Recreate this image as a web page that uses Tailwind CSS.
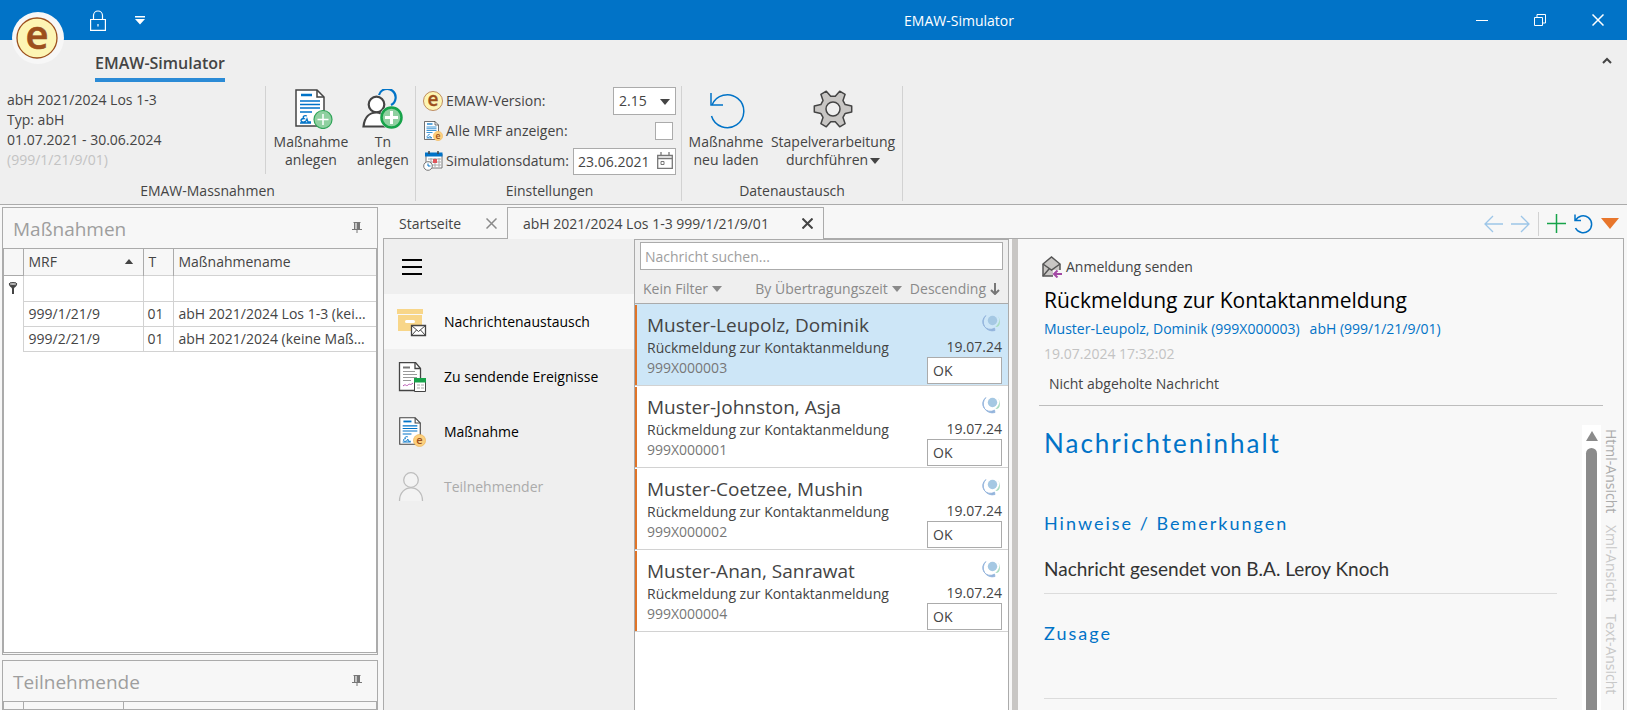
<!DOCTYPE html>
<html lang="de">
<head>
    <meta charset="UTF-8">
    <meta name="viewport" content="width=device-width, initial-scale=1.0">
    <title>EMAW-Simulator</title>
    <script src="https://cdn.jsdelivr.net/npm/@tailwindcss/browser@4"></script>
</head>
<body class="h-screen flex flex-col overflow-hidden bg-[#f7f7f7] font-['Open_Sans','Noto_Sans',sans-serif] text-sm leading-5 text-[#444444]">

    <!-- Icons -->
    <svg class="hidden">
        <symbol id="ico-doc" viewBox="0 0 30 38">
            <path d="M1 1h21l7 7v29H1z" fill="#fff" stroke="#444" stroke-width="1.5"/>
            <path d="M22 1v7h7" fill="none" stroke="#444" stroke-width="1.5"/>
            <path d="M6 6h11" stroke="#0173c7" stroke-width="2.5"/>
            <path d="M5 12h20M5 15.500h20M5 19h20M5 23h12" stroke="#0173c7" stroke-width="1.500"/>
            <path d="M12 27c-3-1-5 1-3 2.500-4 0-4 4 0 3.500 2 0 3-3 3-3l1 3h3M5 34h11" fill="none" stroke="#0173c7" stroke-width="1.300"/>
        </symbol>
        <symbol id="ico-coin" viewBox="0 0 20 20">
            <circle cx="10" cy="10" r="9.300" fill="#fcd07e" stroke="#eeb050" stroke-width="1"/>
            <text x="10" y="15" text-anchor="middle" font-size="17" font-weight="600" fill="#9c4f1c">e</text>
        </symbol>
        <symbol id="ico-e" viewBox="0 0 42 42">
            <circle cx="21" cy="21" r="20" fill="#fdf5b4" stroke="#9c4f1c" stroke-width="1.300"/>
            <text x="21" y="32" text-anchor="middle" font-size="40" font-weight="600" fill="#9c4f1c" stroke="#9c4f1c" stroke-width=".6">e</text>
        </symbol>
        <symbol id="ico-reload" viewBox="0 0 36 36">
            <path d="M1.500 23a16.500 16.500 0 1 0 .5-11" fill="none" stroke="#0173c7" stroke-width="1.500"/>
            <path d="M1 0v12h12" fill="none" stroke="#0173c7" stroke-width="1.500"/>
        </symbol>
        <symbol id="ico-down" viewBox="0 0 10 6"><path d="M0 0h10L5 6z" fill="currentColor"/></symbol>
        <symbol id="ico-pin" viewBox="0 0 10 12">
            <path d="M2 1h3v6H2z" fill="#c5c5c5"/>
            <path d="M5 1h3v7H5z" fill="#777"/>
            <path d="M1.500 .5h7M0 7.500h10M5 8v3M2.500 1v6" fill="none" stroke="#777"/>
        </symbol>
        <symbol id="ico-globe" viewBox="0 0 18 18">
            <path d="M4 1.500A9 9 0 0 0 13 16.500L12.500 14A7 7 0 0 1 4 1.500z" fill="#93b4dc" stroke="#93b4dc" stroke-width=".8" stroke-linejoin="round"/>
            <circle cx="10.500" cy="6.500" r="4.700" fill="#a5c8e3"/>
            <path d="M16.300 2.500c1.800 3.500 1 7.500-3 10.500 3.500.3 5-2.500 4.500-6-.2-2-.8-3.500-1.500-4.500z" fill="#a9dcc0"/>
        </symbol>
    </svg>

    <!-- Titelleiste -->
    <header class="relative flex h-10 shrink-0 items-center bg-[#0173c7] text-white">
        <button class="absolute left-3 top-3 z-10 flex size-[52px] items-center justify-center rounded-full bg-[#f7f7f7]" aria-label="Anwendungsmenü">
            <svg class="mr-0.5 size-[42px]"><use href="#ico-e"/></svg>
        </button>
        <div class="flex w-[465px] items-center pl-[90px]">
            <button aria-label="Sperren">
                <svg width="16" height="21" viewBox="0 0 16 21" fill="none" stroke="#fff" stroke-width="1.200"><path d="M.6 9.500h14.800v10.800H.6z"/><path d="M3.500 9.500V5.500a4.500 4.500 0 0 1 9 0v4"/><path d="M8 14v2.500"/></svg>
            </button>
            <button class="ml-[29px]" aria-label="Schnellzugriff anpassen">
                <svg width="10" height="9" viewBox="0 0 10 9" fill="#fff"><path d="M0 0h10v1.500H0zM0 3h10L5 8.500z"/></svg>
            </button>
        </div>
        <h1 class="flex-1 pt-0.5 text-center">EMAW-Simulator</h1>
        <div class="flex h-full">
            <button class="flex w-[58px] items-center justify-center" aria-label="Minimieren"><svg width="12" height="12" stroke="#fff"><path d="M0 6.500h12"/></svg></button>
            <button class="flex w-[58px] items-center justify-center" aria-label="Wiederherstellen"><svg width="12" height="12" stroke="#fff" fill="none"><path d="M.5 3.500h8v8h-8zM3 3V.5h8.500V9H9"/></svg></button>
            <button class="flex w-[58px] items-center justify-center" aria-label="Schließen"><svg width="12" height="12" stroke="#fff" stroke-width="1.500"><path d="M.5.5l11 11M11.500.5l-11 11"/></svg></button>
        </div>
    </header>

    <!-- Ribbon -->
    <section class="shrink-0 border-b border-[#ababab] bg-[#efefef]">
        <div class="flex h-[46px] items-start justify-between pl-[95px] pr-[15px] pt-3">
            <button class="h-[30px] border-b-4 border-[#2b8bd6] pb-1 text-base font-semibold leading-5">EMAW-Simulator</button>
            <button class="pt-1" aria-label="Menüband minimieren"><svg width="10" height="10" fill="none" stroke="#444" stroke-width="2"><path d="M1 7l4-4 4 4"/></svg></button>
        </div>
        <div class="flex h-[118px] pb-[3px]">
            <div class="flex w-[416px] flex-col border-r border-[#d2d2d2]">
                <div class="flex flex-1 items-start">
                    <div class="h-[88px] w-[266px] border-r border-[#d2d2d2] pl-[7px] pt-1">
                        <p>abH 2021/2024 Los 1-3</p>
                        <p>Typ: abH</p>
                        <p>01.07.2021 - 30.06.2024</p>
                        <p class="text-[#c3c3c3]">(999/1/21/9/01)</p>
                    </div>
                    <button class="flex w-[90px] flex-col items-center pt-[3px] leading-[18px]">
                        <svg class="mb-1 ml-1.5" width="38" height="40" viewBox="0 0 38 40">
                            <use href="#ico-doc" width="30" height="38"/>
                            <circle cx="28" cy="30.500" r="9" fill="#8fd0a0" stroke="#2fa458" stroke-width="1.200"/>
                            <path d="M28 25v11M22.500 30.500h11" stroke="#fff" stroke-width="1.500"/>
                        </svg>
                        <span>Maßnahme<br>anlegen</span>
                    </button>
                    <button class="flex w-[54px] flex-col items-center pt-[3px] leading-[18px]">
                        <svg class="mb-1" width="42" height="40" viewBox="0 0 42 40" fill="none">
                            <path d="M17 6a8.500 8.500 0 1 1 12 10" stroke="#0173c7" stroke-width="2.200"/>
                            <circle cx="14.500" cy="15.500" r="7.800" fill="#fff" stroke="#444" stroke-width="2.200"/>
                            <path d="M1.500 37.500c1-9 6-14 13-14 4 0 6 1.500 8 4v10z" fill="#fff" stroke="#444" stroke-width="2.200"/>
                            <circle cx="29.500" cy="28.500" r="11.500" fill="#efefef"/>
                            <circle cx="29.500" cy="28.500" r="10" fill="#8fd0a0" stroke="#17a34a" stroke-width="2.500"/>
                            <path d="M29.500 22v13M23 28.500h13" stroke="#fff" stroke-width="3"/>
                        </svg>
                        <span>Tn<br>anlegen</span>
                    </button>
                </div>
                <p class="h-5 text-center">EMAW-Massnahmen</p>
            </div>

            <div class="flex w-[266px] flex-col border-r border-[#d2d2d2] pl-[7px] pr-[5px]">
                <div class="flex flex-1 flex-col">
                    <div class="flex h-[30px] items-center">
                        <svg class="mr-[3px] size-5"><use href="#ico-e"/></svg>
                        <label for="version">EMAW-Version:</label>
                        <div class="relative ml-auto">
                            <select id="version" class="h-7 w-[63px] appearance-none border border-[#ababab] bg-white pl-[5px]"><option>2.15</option></select>
                            <svg class="pointer-events-none absolute right-1.5 top-3 h-1.5 w-2.5"><use href="#ico-down"/></svg>
                        </div>
                    </div>
                    <div class="flex h-[30px] items-center">
                        <svg class="mr-[3px]" width="20" height="20" viewBox="0 0 20 20"><use href="#ico-doc" x="1" width="15" height="19"/><use href="#ico-coin" x="10" y="10" width="10" height="10"/></svg>
                        <label for="alle">Alle MRF anzeigen:</label>
                        <input id="alle" type="checkbox" class="ml-auto mr-[3px] size-[18px] appearance-none border border-[#ababab] bg-white">
                    </div>
                    <div class="flex h-[30px] items-center">
                        <svg class="mr-[3px]" width="20" height="20" viewBox="0 0 20 20" fill="none">
                            <path d="M3 3h16v14H3z" fill="#fff" stroke="#777"/><path d="M2 1.500h17.500v4H2z" fill="#0173c7"/><path d="M6 0v3M15 0v3" stroke="#444" stroke-width="1.500"/>
                            <path d="M5 8h13M5 11h13M5 14h13M8 7v9M12 7v9M16 7v9" stroke="#aaa"/><path d="M10 8h4v4h-4z" fill="#e0555a"/>
                            <circle cx="5" cy="15" r="4.300" fill="#fff" stroke="#777"/><path d="M5 12.500V15h2.500" stroke="#0173c7"/>
                        </svg>
                        <label for="datum">Simulationsdatum:</label>
                        <div class="relative ml-auto">
                            <input id="datum" type="text" value="23.06.2021" class="block h-[27px] w-[103px] border border-[#ababab] bg-white pl-1">
                            <button class="absolute right-[3px] top-1" aria-label="Kalender öffnen"><svg width="16" height="17" fill="none" stroke="#777"><path d="M.7 3.500h14.600v12.800H.7zM.5 6.500h15M4 0v3.500M12 0v3.500" stroke-width="1.300"/><path d="M4 9.500h3v3H4z"/></svg></button>
                        </div>
                    </div>
                </div>
                <p class="h-5 text-center">Einstellungen</p>
            </div>

            <div class="flex w-[221px] flex-col border-r border-[#d2d2d2]">
                <div class="flex flex-1 items-start">
                    <button class="flex w-[88px] flex-col items-center pt-[3px] leading-[18px]">
                        <svg class="mb-1 ml-1 mt-1 size-9"><use href="#ico-reload"/></svg>
                        <span>Maßnahme<br>neu laden</span>
                    </button>
                    <button class="flex w-[126px] flex-col items-center pt-[3px] leading-[18px]">
                        <svg class="mb-1" width="40" height="40" viewBox="0 0 40 40" fill="#c8c6c4" stroke="#444" stroke-width="1.500" stroke-linejoin="round">
                            <path d="M32.200 24.400L30 28.400L32.100 34.700L26.700 37.800L22.300 32.800L17.700 32.800L13.300 37.800L7.900 34.700L10 28.400L7.800 24.400L1.300 23.100L1.300 16.900L7.800 15.600L10 11.600L7.900 5.300L13.300 2.200L17.700 7.200L22.300 7.200L26.700 2.200L32.100 5.300L30 11.600L32.200 15.600L38.700 16.900L38.700 23.100Z"/>
                            <circle cx="20" cy="20" r="7" fill="#efefef"/>
                        </svg>
                        <span>Stapelverarbeitung<br>durchführen<svg class="ml-0.5 inline h-1.5 w-2.5 align-middle"><use href="#ico-down"/></svg></span>
                    </button>
                </div>
                <p class="h-5 text-center">Datenaustausch</p>
            </div>
        </div>
    </section>

    <main class="flex min-h-0 flex-1 pr-[3px]">

        <!-- Linke Spalte -->
        <aside class="flex w-[383px] shrink-0 flex-col gap-[5px] pl-0.5 pr-[5px] pt-0.5">
            <section class="flex h-[448px] shrink-0 flex-col border border-[#ababab] pb-px">
                <div class="flex h-10 items-center justify-between pl-2.5 pr-[15px]">
                    <h2 class="pt-0.5 text-[19px] text-[#9e9e9e]">Maßnahmen</h2>
                    <button aria-label="Anheften"><svg width="10" height="12"><use href="#ico-pin"/></svg></button>
                </div>
                <div class="flex-1 overflow-hidden border border-[#ababab] bg-white">
                    <table class="w-full table-fixed border-collapse text-left">
                        <colgroup><col class="w-[19px]"><col class="w-[120px]"><col class="w-[30px]"><col></colgroup>
                        <thead class="bg-[#f7f7f7]">
                            <tr class="h-[26px] border-b border-[#ababab]">
                                <th></th>
                                <th class="border-l border-[#ababab] px-[5px] font-normal"><div class="flex items-center justify-between">MRF<svg class="mr-1 h-[5px] w-2.5 rotate-180"><use href="#ico-down"/></svg></div></th>
                                <th class="border-l border-[#ababab] px-[5px] font-normal">T</th>
                                <th class="border-l border-[#ababab] px-[5px] font-normal">Maßnahmename</th>
                            </tr>
                        </thead>
                        <tbody>
                            <tr class="h-[26px]">
                                <td><svg class="mx-auto" width="10" height="12"><path d="M1 2c0 3 3 3 3 5v5h2V7c0-2 3-2 3-5z" fill="#444"/><ellipse cx="5" cy="2" rx="4" ry="1.500" fill="#bbb" stroke="#444"/></svg></td>
                                <td class="border border-[#d2d2d2]"></td>
                                <td class="border border-[#d2d2d2]"></td>
                                <td class="border-y border-[#d2d2d2]"></td>
                            </tr>
                            <tr class="h-[25px]">
                                <td></td>
                                <td class="border border-[#d2d2d2] px-[5px]">999/1/21/9</td>
                                <td class="border border-[#d2d2d2] px-1">01</td>
                                <td class="truncate border-y border-[#d2d2d2] px-[5px]">abH 2021/2024 Los 1-3 (keine Maßnahme)</td>
                            </tr>
                            <tr class="h-[25px]">
                                <td></td>
                                <td class="border border-[#d2d2d2] px-[5px]">999/2/21/9</td>
                                <td class="border border-[#d2d2d2] px-1">01</td>
                                <td class="truncate border-y border-[#d2d2d2] px-[5px]">abH 2021/2024 (keine Maßnahme)</td>
                            </tr>
                        </tbody>
                    </table>
                </div>
            </section>
            <section class="flex flex-1 flex-col border border-[#ababab] overflow-hidden">
                <div class="flex h-10 shrink-0 items-center justify-between pl-2.5 pr-[15px]">
                    <h2 class="pt-0.5 text-[19px] text-[#9e9e9e]">Teilnehmende</h2>
                    <button aria-label="Anheften"><svg width="10" height="12"><use href="#ico-pin"/></svg></button>
                </div>
                <div class="flex-1 border border-[#ababab]">
                    <table class="w-full table-fixed border-collapse text-left">
                        <colgroup><col class="w-[19px]"><col class="w-[100px]"><col></colgroup>
                        <thead>
                            <tr class="h-6 leading-[18px]">
                                <th></th>
                                <th class="border-l border-[#ababab] px-[5px] font-normal">BA-Nr.</th>
                                <th class="border-l border-[#ababab] px-[5px] font-normal">Name</th>
                            </tr>
                        </thead>
                    </table>
                </div>
            </section>
        </aside>

        <!-- Dokumentbereich -->
        <div class="flex min-w-0 flex-1 flex-col">
            <div class="flex h-[34px] shrink-0 border-b border-[#ababab]">
                <div class="flex w-[124px] items-center justify-between pl-4 pr-2.5 pt-1">
                    <button>Startseite</button>
                    <button aria-label="Tab schließen"><svg width="11" height="11" stroke="#8a8a8a" stroke-width="1.500"><path d="M.5.5l10 10M10.500.5l-10 10"/></svg></button>
                </div>
                <div class="-mb-px mt-0.5 flex w-[317px] items-center justify-between border border-b-0 border-[#ababab] bg-[#f7f7f7] pl-[15px] pr-2.5">
                    <button>abH 2021/2024 Los 1-3 999/1/21/9/01</button>
                    <button aria-label="Tab schließen"><svg width="11" height="11" stroke="#444" stroke-width="2"><path d="M.5.5l10 10M10.500.5l-10 10"/></svg></button>
                </div>
                <div class="ml-auto flex items-center pr-[5px] pt-1">
                    <button aria-label="Zurück"><svg width="19" height="18" fill="none" stroke="#9dc6e8" stroke-width="1.300"><path d="M19 9H1M9 1L1 9l8 8"/></svg></button>
                    <button class="ml-2" aria-label="Vorwärts"><svg width="19" height="18" fill="none" stroke="#9dc6e8" stroke-width="1.300"><path d="M0 9h18M10 1l8 8-8 8"/></svg></button>
                    <span class="ml-2 h-6 border-l border-[#d2d2d2]"></span>
                    <button class="ml-2" aria-label="Neu"><svg width="19" height="19" stroke="#17a34a" stroke-width="1.500"><path d="M0 9.500h19M9.500 0v19"/></svg></button>
                    <button class="ml-2" aria-label="Aktualisieren"><svg width="19" height="20" viewBox="0 0 19 20" fill="none" stroke="#0173c7" stroke-width="1.500"><path d="M1.500 14a8.500 8.500 0 1 0 0-7.500M1 .5v6h6"/></svg></button>
                    <button class="ml-2" aria-label="Mehr"><svg width="18" height="11" fill="#e8762c"><path d="M0 0h18L9 11z"/></svg></button>
                </div>
            </div>

            <div class="flex min-h-0 flex-1 border-x border-[#ababab]">
                <!-- Navigation -->
                <nav class="w-[250px] shrink-0 bg-[#efefef] text-black">
                    <button class="flex h-[55px] w-full items-center pl-[18px]" aria-label="Navigation">
                        <svg width="20" height="16"><path d="M0 1h20M0 8h20M0 15h20" stroke="#000" stroke-width="2"/></svg>
                    </button>
                    <a href="#" class="flex h-[55px] items-center gap-[17px] bg-[#f8f8f8] pl-[13px]">
                        <svg width="30" height="30" fill="none">
                            <path d="M0 2h26v5H0z" fill="#f8d689"/><path d="M1 8h24v16H1z" fill="#f8d689"/><rect x="8" y="13" width="10" height="3" rx="1.500" fill="#fff"/>
                            <path d="M14.500 18.500h14v10h-14z" fill="#fff" stroke="#444" stroke-width="1.300"/><path d="M14.500 18.500l7 6 7-6M14.500 28.500l5-5.500M28.500 28.500l-5-5.500" stroke="#444"/>
                        </svg>
                        Nachrichtenaustausch
                    </a>
                    <a href="#" class="flex h-[55px] items-center gap-[17px] pl-[13px]">
                        <svg width="30" height="30" fill="none">
                            <path d="M2.500.5h16l5 6v22h-21z" fill="#fff" stroke="#444" stroke-width="1.300"/><path d="M18 .5v6h5.500" stroke="#444" stroke-width="1.300"/>
                            <path d="M6 5.500h7" stroke="#777" stroke-width="2"/><path d="M6 9.500h12M6 12.500h14M6 15.500h14M6 18.500h8" stroke="#999"/>
                            <path d="M6 24c3-3 3 1 5-1s2 1 5-2" stroke="#b74fb0"/>
                            <path d="M17.500 18.500h11v11h-11z" fill="#fff" stroke="#444"/><path d="M17 16h12v4.500H17z" fill="#17a34a"/><path d="M20 23h3M24 23h3M20 26h3M24 26h3" stroke="#aaa"/>
                        </svg>
                        Zu sendende Ereignisse
                    </a>
                    <a href="#" class="flex h-[55px] items-center gap-[17px] pl-[13px]">
                        <svg width="30" height="30" viewBox="0 0 30 30"><use href="#ico-doc" x="2" width="22" height="28"/><use href="#ico-coin" x="16" y="17" width="13" height="13"/></svg>
                        Maßnahme
                    </a>
                    <a href="#" class="flex h-[55px] items-center gap-[17px] pl-[13px] text-[#ababab]">
                        <svg width="30" height="30" fill="#f3f3f3" stroke="#bdbdbd" stroke-width="1.300"><circle cx="14" cy="8" r="7.300"/><path d="M2.500 29c0-17.500 23-17.500 23 0"/></svg>
                        Teilnehmender
                    </a>
                </nav>

                <!-- Nachrichtenliste -->
                <section class="flex w-[375px] shrink-0 flex-col border border-b-0 border-[#ababab] bg-white">
                    <div class="border-b border-[#ababab] bg-[#efefef] px-[5px] pt-0.5">
                        <input type="search" placeholder="Nachricht suchen..." aria-label="Nachricht suchen" class="block h-7 w-full border border-[#ababab] bg-white px-1 placeholder:text-[#9e9e9e]">
                        <div class="flex h-[33px] items-center px-[3px] pt-1 text-[#8a8a8a]">
                            <button class="flex items-center gap-1">Kein Filter<svg class="h-1.5 w-2.5"><use href="#ico-down"/></svg></button>
                            <button class="ml-auto flex items-center gap-1">By Übertragungszeit<svg class="h-1.5 w-2.5"><use href="#ico-down"/></svg></button>
                            <button class="ml-2 flex items-center gap-1">Descending<svg width="10" height="12" fill="none" stroke="#777" stroke-width="2"><path d="M5 0v10M1 7l4 4 4-4"/></svg></button>
                        </div>
                    </div>
                    <ul>
                        <li class="flex h-[82px] justify-between border-b border-[#d2d2d2] bg-[#cde6f7]">
                            <div class="mt-px flex-1 border-l-2 border-[#e07428] pl-2.5 pt-[7px]">
                                <h3 class="text-[19px] leading-[26px]">Muster-Leupolz, Dominik</h3>
                                <p>Rückmeldung zur Kontaktanmeldung</p>
                                <p class="text-[#777777]">999X000003</p>
                            </div>
                            <div class="flex flex-col items-end pr-1.5 pt-2.5">
                                <svg class="mr-0.5" width="18" height="18"><use href="#ico-globe"/></svg>
                                <p class="pt-[5px]">19.07.24</p>
                                <input value="OK" readonly aria-label="Status" class="h-[27px] w-[75px] border border-[#ababab] bg-white px-[5px]">
                            </div>
                        </li>
                        <li class="flex h-[82px] justify-between border-b border-[#d2d2d2]">
                            <div class="mt-px flex-1 border-l-2 border-[#e07428] pl-2.5 pt-[7px]">
                                <h3 class="text-[19px] leading-[26px]">Muster-Johnston, Asja</h3>
                                <p>Rückmeldung zur Kontaktanmeldung</p>
                                <p class="text-[#777777]">999X000001</p>
                            </div>
                            <div class="flex flex-col items-end pr-1.5 pt-2.5">
                                <svg class="mr-0.5" width="18" height="18"><use href="#ico-globe"/></svg>
                                <p class="pt-[5px]">19.07.24</p>
                                <input value="OK" readonly aria-label="Status" class="h-[27px] w-[75px] border border-[#ababab] bg-white px-[5px]">
                            </div>
                        </li>
                        <li class="flex h-[82px] justify-between border-b border-[#d2d2d2]">
                            <div class="mt-px flex-1 border-l-2 border-[#e07428] pl-2.5 pt-[7px]">
                                <h3 class="text-[19px] leading-[26px]">Muster-Coetzee, Mushin</h3>
                                <p>Rückmeldung zur Kontaktanmeldung</p>
                                <p class="text-[#777777]">999X000002</p>
                            </div>
                            <div class="flex flex-col items-end pr-1.5 pt-2.5">
                                <svg class="mr-0.5" width="18" height="18"><use href="#ico-globe"/></svg>
                                <p class="pt-[5px]">19.07.24</p>
                                <input value="OK" readonly aria-label="Status" class="h-[27px] w-[75px] border border-[#ababab] bg-white px-[5px]">
                            </div>
                        </li>
                        <li class="flex h-[82px] justify-between border-b border-[#d2d2d2]">
                            <div class="mt-px flex-1 border-l-2 border-[#e07428] pl-2.5 pt-[7px]">
                                <h3 class="text-[19px] leading-[26px]">Muster-Anan, Sanrawat</h3>
                                <p>Rückmeldung zur Kontaktanmeldung</p>
                                <p class="text-[#777777]">999X000004</p>
                            </div>
                            <div class="flex flex-col items-end pr-1.5 pt-2.5">
                                <svg class="mr-0.5" width="18" height="18"><use href="#ico-globe"/></svg>
                                <p class="pt-[5px]">19.07.24</p>
                                <input value="OK" readonly aria-label="Status" class="h-[27px] w-[75px] border border-[#ababab] bg-white px-[5px]">
                            </div>
                        </li>
                    </ul>
                </section>

                <div class="ml-[3px] w-1.5 shrink-0 bg-[#c8c6c4]"></div>

                <!-- Nachrichtendetail -->
                <article class="flex min-w-0 flex-1 flex-col bg-[#f8f8f8] pl-[21px]">
                    <div class="mr-5 border-b border-[#bdbdbd] pb-[11px] pl-[5px] pt-[17px]">
                        <button class="-ml-0.5 flex items-center gap-1">
                            <svg width="20" height="22" fill="none" stroke="#555" stroke-width="1.500"><path d="M1 8l8.500-7L18 8v12H1z" fill="#c8c6c4"/><path d="M1 8l8.500 6L18 8M1 20l6-7"/><path d="M11 14h9v8h-9z" fill="#f8f8f8" stroke="none"/><path d="M20 18h-8M15.500 14.500L12 18l3.500 3.500" stroke="#a349a4" stroke-width="2"/></svg>
                            Anmeldung senden
                        </button>
                        <h2 class="pt-1 text-[21px] leading-9 text-black">Rückmeldung zur Kontaktanmeldung</h2>
                        <p class="flex gap-2.5 pt-px text-[#0173c7]"><a href="#">Muster-Leupolz, Dominik (999X000003)</a><a href="#">abH (999/1/21/9/01)</a></p>
                        <p class="pt-[5px] text-[#c3c3c3]">19.07.2024 17:32:02</p>
                        <p class="pl-[5px] pt-2.5">Nicht abgeholte Nachricht</p>
                    </div>
                    <div class="flex min-h-0 flex-1 pt-[19px]">
                        <div class="flex-1 overflow-hidden pl-[5px] pr-[25px] font-['Lato',sans-serif]">
                            <h2 class="text-[26px] leading-9 tracking-[2px] text-[#0173c7]">Nachrichteninhalt</h2>
                            <h3 class="mt-[50px] text-[18px] leading-6 tracking-[2px] text-[#0173c7]">Hinweise / Bemerkungen</h3>
                            <p class="border-b border-[#dcdcdc] pb-3 pt-[22px] text-[19px] leading-6 text-[#333333]">Nachricht gesendet von B.A. Leroy Knoch</p>
                            <h3 class="border-b border-[#dcdcdc] pb-[53px] pt-[27px] text-[18px] leading-6 tracking-[2px] text-[#0173c7]">Zusage</h3>
                        </div>
                        <div class="flex w-[19px] flex-col items-center bg-white pt-1.5">
                            <svg width="12" height="10"><path d="M6 0l6 10H0z" fill="#8b8b8b"/></svg>
                            <div class="mt-[7px] w-[11px] flex-1 rounded-t-full bg-[#8b8b8b]"></div>
                        </div>
                        <div class="mr-0.5 flex w-5 items-center gap-3 pt-1 text-[#c8c8c8] [writing-mode:vertical-rl]">
                            <button class="text-[#ababab]">Html-Ansicht</button>
                            <button>Xml-Ansicht</button>
                            <button>Text-Ansicht</button>
                        </div>
                    </div>
                </article>
            </div>
        </div>
    </main>

</body>
</html>
